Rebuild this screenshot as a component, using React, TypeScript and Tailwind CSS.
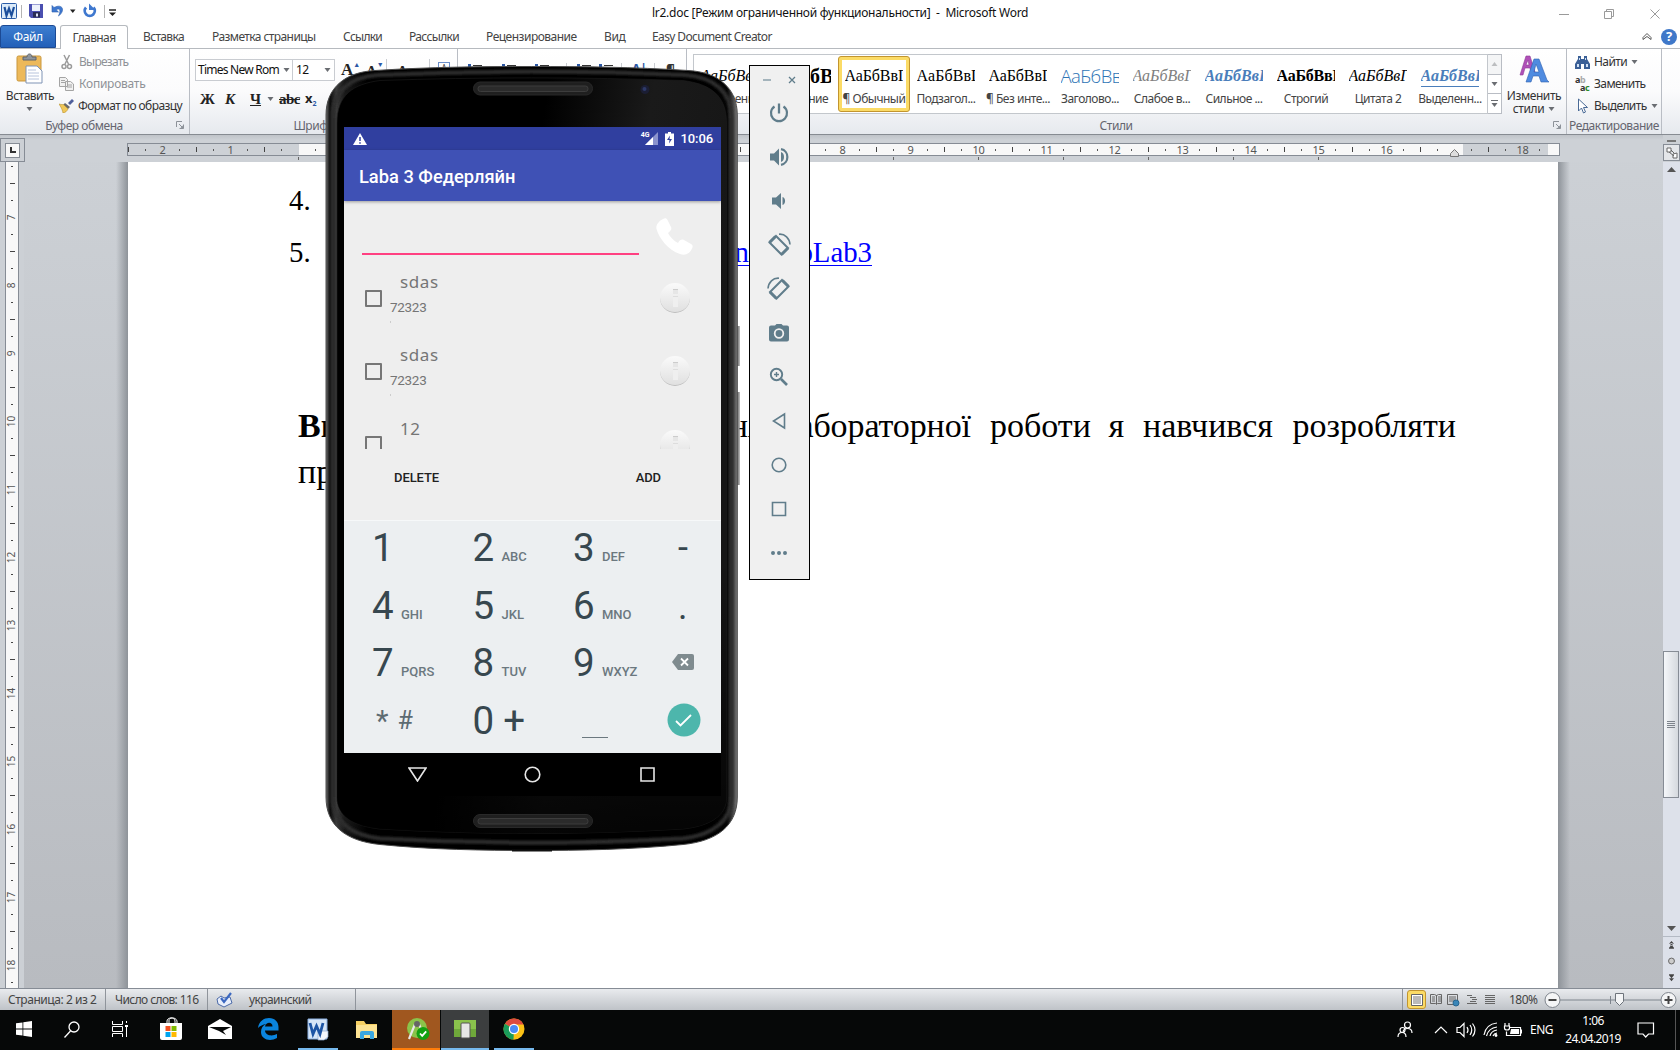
import React from 'react';

type Kids = { children?: React.ReactNode; className?: string };

const UI = "font-['Noto_Sans',sans-serif]";

/* ---------- small shared pieces ---------- */

function Caret({ className = '' }: { className?: string }) {
  return (
    <svg width="7" height="4" viewBox="0 0 7 4" className={'shrink-0 ' + className}>
      <path d="M0.500 0h6L3.500 4z" fill="#6a6d72" />
    </svg>
  );
}

function Launcher() {
  return (
    <svg width="8" height="8" viewBox="0 0 8 8" fill="none" stroke="#8d9299">
      <path d="M0.500 6V0.500H6M3 3l3.500 3.500M7.500 3.500v4h-4" />
      <path d="M4 7.500h3.500V4z" fill="#8d9299" stroke="none" />
    </svg>
  );
}

/* ---------- title bar ---------- */

function TitleBar() {
  return (
    <div className="flex h-[25px] items-center bg-white">
      <svg width="120" height="25" viewBox="0 0 120 25" className="shrink-0">
        <rect x="1.500" y="3.500" width="15" height="15" rx="1" fill="#dcebf9" stroke="#2b5da8" />
        <path d="M4.500 7l2 8.500 2.500-7 2.500 7L14 7" fill="none" stroke="#1c4f9c" strokeWidth="2.200" />
        <path d="M21.500 5v13M104.500 5v13" stroke="#b4b4b4" />
        <path d="M29 4h14v14H31l-2-2z" fill="#4a4fb0" />
        <rect x="32" y="4.500" width="8" height="6.500" fill="#eef2fb" />
        <rect x="33" y="12" width="7" height="5.500" fill="#2a2d55" />
        <rect x="36" y="13.500" width="2" height="3" fill="#dfe3f6" />
        <path d="M52 5.500v6.500h6.500l-2.300-2.200c3-2 5.300 0 2.300 6.200 7-5 4.500-13-4.500-8.500z" fill="#3f78cf" stroke="#2b5fae" strokeWidth=".6" />
        <path d="M70 9.500h5.500L72.800 13z" fill="#222" />
        <path d="M86 7.500a5 5 0 1 0 7.500 0" fill="none" stroke="#3f78cf" strokeWidth="2.800" />
        <path d="M89 3.500v6.500h6.500z" fill="#3f78cf" />
        <path d="M109 10h7" stroke="#222" strokeWidth="1.500" />
        <path d="M109 12.500h7L112.500 16z" fill="#222" />
      </svg>
      <div className="w-[532px]" />
      <div className="w-[390px] text-[12px] tracking-[-0.27px] whitespace-pre text-[#111]">lr2.doc [Режим ограниченной функциональности]  -  Microsoft Word</div>
      <div className="flex-1" />
      <svg width="130" height="25" viewBox="0 0 130 25" fill="none" stroke="#9a9a9a" className="shrink-0">
        <path d="M9 14.500h10M54.500 11.500h7v7h-7zM56.500 11v-1.500h7v7h-1.500M100.500 9.500l9 9m0-9l-9 9" />
      </svg>
    </div>
  );
}

/* ---------- ribbon tabs ---------- */

function TabRow() {
  const t = 'shrink-0 whitespace-nowrap text-[12px] text-[#444] pt-px';
  return (
    <div className="flex h-[24px] items-center border-b border-[#b6babf] bg-white">
      <div className="flex h-[23px] w-[56px] items-center justify-center rounded-t-[3px] border border-[#1c4a94] bg-linear-to-b from-[#3d7ed0] to-[#2360b8] pt-px text-[12px] tracking-[-0.4px] text-white">Файл</div>
      <div className="ml-[4px] flex h-[24px] w-[68px] items-center justify-center self-start rounded-t-[3px] border border-b-0 border-[#b6babf] bg-white pt-px text-[12px] tracking-[-0.6px] text-[#444]">
        Главная
      </div>
      <div className={t + ' ml-[15px] w-[69px] tracking-[-0.65px]'}>Вставка</div>
      <div className={t + ' w-[131px] tracking-[-0.58px]'}>Разметка страницы</div>
      <div className={t + ' w-[66px] tracking-[-0.75px]'}>Ссылки</div>
      <div className={t + ' w-[77px] tracking-[-0.65px]'}>Рассылки</div>
      <div className={t + ' w-[118px] tracking-[-0.5px]'}>Рецензирование</div>
      <div className={t + ' w-[48px] tracking-[-0.4px]'}>Вид</div>
      <div className={t + ' w-[130px] tracking-[-0.62px]'}>Easy Document Creator</div>
      <div className="flex-1" />
      <svg width="10" height="9" viewBox="0 0 10 9" fill="none" stroke="#555" className="mr-[9px]">
        <path d="M1 5.500L5 1.500l4 4M1 5.500v2l4-3 4 3v-2" />
      </svg>
      <div className="mr-[3px] flex size-[16px] items-center justify-center rounded-full bg-[#3f78c9] text-[13px] font-bold text-white">?</div>
    </div>
  );
}

/* ---------- ribbon ---------- */

function Group({ label, className = '', launcher = false, children }: Kids & { label: string; launcher?: boolean }) {
  return (
    <div className={'flex shrink-0 flex-col border-r border-[#b9bdc4] ' + className}>
      <div className="h-[67px] overflow-hidden">{children}</div>
      <div className="flex h-[19px] items-center">
        <div className="flex-1 pt-[2px] text-center text-[12px] tracking-[-0.45px] whitespace-nowrap text-[#65656f]">{label}</div>
        {launcher && (
          <div className="w-[21px] pl-[8px]">
            <Launcher />
          </div>
        )}
      </div>
    </div>
  );
}

function Clipboard() {
  const row = 'flex h-[22px] items-center gap-[5px] text-[12px] whitespace-nowrap';
  return (
    <Group label="Буфер обмена" launcher className="w-[190px]">
      <div className="flex">
        <div className="flex w-[59px] flex-col items-center pt-[4px]">
          <svg width="28" height="32" viewBox="0 0 28 32">
            <rect x="1" y="3" width="24" height="25" rx="1.500" fill="#edb95a" stroke="#c9973f" />
            <path d="M7 7V4h4c0-4 5-4 5 0h4v3z" fill="#8f959c" stroke="#5f656c" />
            <path d="M10 13h11l5 5v12H10z" fill="#fff" stroke="#7f93b5" />
            <path d="M12 17h8M12 20h11M12 23h11M12 26h11" stroke="#b8c4dc" />
          </svg>
          <div className="mt-[2px] pl-px text-[12px] leading-[17px] tracking-[-0.5px] text-[#333]">Вставить</div>
          <Caret className="mt-[3px]" />
        </div>
        <div className="pt-[2px]">
          <div className={row + ' text-[#8f9297]'}>
            <svg width="15" height="16" viewBox="0 0 15 16" fill="none" stroke="#9b9b9b" strokeWidth="1.500">
              <path d="M5 1l4.500 9M10.500 1L6 10" />
              <circle cx="5" cy="12.500" r="2" />
              <circle cx="10.500" cy="12.500" r="2" />
            </svg>
            <span className="tracking-[-0.75px]">Вырезать</span>
          </div>
          <div className={row + ' text-[#8f9297]'}>
            <svg width="15" height="14" viewBox="0 0 15 14" fill="#f1f1f1" stroke="#a4a4a4">
              <path d="M.500.500h6l2 2v7h-8zM6.500 4.500h5l3 2.500v6.500h-8z" />
              <path d="M2 3.500h4M2 5.500h4M8 8h5M8 10h5" />
            </svg>
            <span className="tracking-[-0.25px]">Копировать</span>
          </div>
          <div className={row + ' text-[#333]'}>
            <svg width="15" height="14" viewBox="0 0 15 14">
              <path d="M9 4l4-4 2 2-4 4z" fill="#4f5f9b" />
              <path d="M6 4l5 4-2 2-5-4z" fill="#6a6a6a" />
              <path d="M0 5c3 1 4 0 5 1l4 4c-1 2-3 4-5 4C3 9 1 7 0 5z" fill="#efc75a" stroke="#b8912c" strokeWidth=".6" />
            </svg>
            <span className="-ml-px tracking-[-0.57px]">Формат по образцу</span>
          </div>
        </div>
      </div>
    </Group>
  );
}

function FontGroup() {
  const b = "shrink-0 font-['Liberation_Serif',serif] text-[15px] font-bold text-[#222]";
  return (
    <Group label="Шрифт" launcher className="w-[268px]">
      <div className="flex h-[32px] items-end pl-[5px]">
        <div className="flex h-[22px] w-[98px] shrink-0 items-center border border-[#c9ccd1] bg-white pl-[2px] text-[12px] tracking-[-0.75px] whitespace-nowrap text-[#111]">
          <span className="w-[85px]">Times New Rom</span>
          <Caret />
        </div>
        <div className="-ml-px flex h-[22px] w-[43px] shrink-0 items-center justify-between border border-[#c9ccd1] bg-white pr-[3px] pl-[3px] text-[12px] tracking-[-0.5px] text-[#111]">
          12
          <Caret />
        </div>
        <div className={b + ' ml-[6px] flex h-[22px] w-[25px] items-center text-[17px]'}>
          A<span className="mb-[9px] text-[7px] text-[#2b57a5]">▲</span>
        </div>
        <div className={b + ' flex h-[22px] w-[20px] items-center pt-[3px] text-[13px]'}>
          A<span className="mb-[12px] text-[7px] text-[#2b57a5]">▼</span>
        </div>
        <div className="h-[22px] w-px bg-[#c9ccd1]" />
        <div className={b + ' ml-[10px] h-[20px] w-[32px] text-[14px] leading-[20px]'}>Aa</div>
        <div className="h-[22px] w-px bg-[#c9ccd1]" />
        <div className="ml-[8px] flex h-[19px] w-[12px] items-start justify-center border border-[#6c8ec8] text-[8px] leading-[10px] text-[#333]">A</div>
      </div>
      <div className="flex h-[36px] items-center pl-[10px]">
        <span className={b + ' w-[25px]'}>Ж</span>
        <span className={b + ' w-[25px] italic'}>К</span>
        <span className={b + ' w-[17px] underline'}>Ч</span>
        <Caret />
        <span className={b + ' ml-[5px] w-[26px] text-[11.500px] tracking-[-0.5px] line-through'}>abc</span>
        <span className="text-[13px] font-bold text-[#222]">x</span>
        <span className="mt-[10px] text-[7px] font-bold text-[#2b57a5]">2</span>
      </div>
    </Group>
  );
}

function ListIcon() {
  return (
    <svg width="14" height="16" viewBox="0 0 14 16">
      <path d="M5 2.500h9M5 7.500h9M5 12.500h9" stroke="#333" strokeWidth="1.200" />
      <path d="M0 1h3v3H0zM0 6h3v3H0zM0 11h3v3H0z" fill="#2b57a5" />
    </svg>
  );
}

function ParagraphGroup() {
  return (
    <Group label="Абзац" launcher className="w-[229px]">
      <div className="flex items-start pt-[14px] pl-[10px]">
        <div className="w-[34px]"><ListIcon /></div>
        <div className="w-[33px]"><ListIcon /></div>
        <div className="w-[31px]"><ListIcon /></div>
        <div className="mr-[10px] h-[22px] w-px bg-[#c9ccd1]" />
        <div className="w-[22px]"><ListIcon /></div>
        <div className="w-[22px]"><ListIcon /></div>
        <div className="mr-[10px] h-[22px] w-px bg-[#c9ccd1]" />
        <div className="w-[22px] text-[12px] leading-[12px] font-bold text-[#2b57a5]">A|</div>
        <div className="mr-[11px] h-[22px] w-px bg-[#c9ccd1]" />
        <div className="text-[14px] leading-[14px] font-bold text-[#333]">¶</div>
      </div>
    </Group>
  );
}

const serif = "font-['Liberation_Serif',serif]";
const STYLES = [
  { s: 'АаБбВвГ', n: 'Выделение', c: serif + ' italic text-black text-[16px]' },
  { s: 'АаБбВ', n: 'Название', c: serif + ' font-bold text-black text-[20px]' },
  { s: 'АаБбВвГ', n: '¶ Обычный', c: serif + ' text-black text-[16px] tracking-[-0.1px]' },
  { s: 'АаБбВвГ', n: 'Подзагол...', c: serif + ' text-black text-[16px] tracking-[0.1px]' },
  { s: 'АаБбВвГ', n: '¶ Без инте...', c: serif + ' text-black text-[16px] tracking-[-0.1px]' },
  { s: 'АаБбВв', n: 'Заголово...', c: "font-['Open_Sans',sans-serif] font-light text-[#2e74b5] text-[18.500px] tracking-[-0.6px]" },
  { s: 'АаБбВвГ', n: 'Слабое в...', c: serif + ' italic text-[#808080] text-[16px]' },
  { s: 'АаБбВвГ', n: 'Сильное ...', c: serif + ' italic font-bold text-[#4a7ebb] text-[16px]' },
  { s: 'АаБбВвГ', n: 'Строгий', c: serif + ' font-bold text-black text-[16px] tracking-[-0.2px]' },
  { s: 'АаБбВвГ', n: 'Цитата 2', c: serif + ' italic text-black text-[16px]' },
  { s: 'АаБбВвГ', n: 'Выделенн...', c: serif + ' italic font-bold text-[#4a7ebb] text-[16px] border-b border-[#4a7ebb]' },
];

function StylesGroup() {
  return (
    <Group label="Стили" launcher className="w-[880px]">
      <div className="flex">
        <div className="mt-[5px] ml-[6px] flex h-[60px] w-[795px] shrink-0 border border-[#c3c7cc] bg-white py-px">
          {STYLES.map((x, i) => (
            <div
              key={i}
              className={
                'flex h-[56px] w-[72px] shrink-0 flex-col items-center ' +
                (i === 2 ? 'rounded-[3px] border border-[#c2952f] bg-[#fbdb66] p-[3px]' : 'p-[4px]')
              }
            >
              <div className="flex h-full w-full flex-col items-center bg-white">
                <div className={'mt-[7px] mr-px h-[20px] w-[58px] overflow-hidden leading-[18px] whitespace-nowrap ' + x.c}>{x.s}</div>
                <div className="mt-[5px] text-[12px] leading-[14px] tracking-[-0.5px] whitespace-nowrap text-[#444]">{x.n}</div>
              </div>
            </div>
          ))}
        </div>
        <div className="mt-[5px] flex h-[60px] w-[14px] flex-col divide-y divide-[#b9bdc4] border border-l-0 border-[#b9bdc4]">
          <div className="flex flex-1 items-center justify-center bg-[#f4f5f6]"><Caret className="rotate-180 opacity-40" /></div>
          <div className="flex flex-1 items-center justify-center bg-white"><Caret /></div>
          <div className="flex flex-1 flex-col items-center justify-center gap-[2px] bg-white">
            <div className="h-px w-[7px] bg-[#6a6d72]" />
            <Caret />
          </div>
        </div>
        <div className="flex flex-1 flex-col items-center pt-[6px]">
          <svg width="30" height="29" viewBox="0 0 30 29">
            <path d="M1 20L7 1h4l5 16h-4l-1-4H6l-2 7zM7 10h3L9 5z" fill="#b050b8" stroke="#8d3a97" strokeWidth=".6" />
            <path d="M7 27L15 4h5l8 21 2 2h-8l-2-6h-6l-2 6zM15 17h5l-3-8z" fill="#4f8be0" stroke="#2f62b0" strokeWidth=".6" />
          </svg>
          <div className="mt-[5px] text-center text-[12px] leading-[13px] text-[#333]">
            <div className="tracking-[-0.4px]">Изменить</div>
            <div className="flex items-center justify-center gap-[4px] tracking-[-0.4px]">стили <Caret /></div>
          </div>
        </div>
      </div>
    </Group>
  );
}

function EditingGroup() {
  const row = 'flex h-[22px] items-center gap-[4px] text-[12px] tracking-[-0.6px] text-[#333]';
  return (
    <Group label="Редактирование" className="w-[95px]">
      <div className="pt-[2px] pl-[8px]">
        <div className={row}>
          <svg width="15" height="13" viewBox="0 0 15 13" fill="#3a5f96">
            <path d="M3 0h3v3h3V0h3v3l3 5v5H9V8H6v5H0V8l3-5z" />
            <path d="M2 8h2v3H2zM11 8h2v3h-2zM4 2h1v2H4zM10 2h1v2h-1z" fill="#cfe0f5" />
          </svg>
          Найти <Caret />
        </div>
        <div className={row}>
          <div className="w-[15px] text-[9px] leading-[8px] font-bold tracking-[-0.5px]">
            <span className="text-[#333]">a</span><span className="text-[#aaa]">b</span>
            <div className="pl-[5px] text-[#333]">a<span className="text-[#2a8a2a]">c</span></div>
          </div>
          Заменить
        </div>
        <div className={row}>
          <svg width="15" height="16" viewBox="0 0 15 16"><path d="M3.500 1v12l3-3 2 5 2-1-2-4.500h4z" fill="#fff" stroke="#4a6a96" /></svg>
          Выделить <Caret />
        </div>
      </div>
    </Group>
  );
}

function Ribbon() {
  return (
    <div className="flex h-[86px] border-b border-[#868b92] bg-linear-to-b from-white via-[#fbfbfc] to-[#e6e9ee]">
      <Clipboard />
      <FontGroup />
      <ParagraphGroup />
      <StylesGroup />
      <EditingGroup />
    </div>
  );
}

/* ---------- rulers ---------- */

function HRuler() {
  const cells = Array.from({ length: 84 }, (_, i) => i - 10);
  return (
    <div className="flex h-[27px] flex-1 flex-col pt-[8px]">
      <div className="flex h-[13px] w-[1433px] border border-[#868c95] bg-linear-to-r from-[#cdd1d6] from-[171px] to-[#f8f8f8] to-[171px]">
        <div className="-ml-[8px] flex h-[11px]">
          {cells.map((k) => (
            <div key={k} className={'flex w-[17px] shrink-0 items-center justify-center ' + (k > 68 ? 'bg-[#cdd1d6]' : '')}>
              {k % 4 === 0 && k !== 0 && k !== 68 ? (
                <span className="text-[11px] leading-[11px] tracking-[-0.3px] text-[#555]">{Math.abs(k / 4)}</span>
              ) : k === 0 ? null : k === 68 ? (
                <svg width="9" height="8" viewBox="0 0 9 8" className="mt-[6px]"><path d="M.500 7.500V4.500L4.500.500l4 4v3z" fill="#ddd" stroke="#777" /></svg>
              ) : k % 2 === 0 ? (
                <div className="h-[5px] w-px bg-[#444]" />
              ) : (
                <div className="h-[2px] w-px bg-[#555]" />
              )}
            </div>
          ))}
        </div>
      </div>
      <div className="ml-[171px] flex h-[4px] pt-px">
        {Array.from({ length: 13 }, (_, i) => (
          <div key={i} className="mr-[84px] h-[3px] w-px bg-[#666]" />
        ))}
      </div>
    </div>
  );
}

function VRuler() {
  const cells = Array.from({ length: 50 }, (_, i) => i - 3);
  return (
    <div className="h-[827px] w-[24px] shrink-0 overflow-hidden bg-[#ccd0d5] pl-[5px]">
      <div className="flex h-[827px] w-[14px] flex-col items-center overflow-hidden border-x border-[#868c95] bg-[#f8f8f8]">
        <div className="-mt-[4px] flex flex-col">
          {cells.map((k) => (
            <div key={k} className="flex h-[17px] w-[12px] shrink-0 items-center justify-center">
              {k % 4 === 0 ? (
                <span className="-rotate-90 text-[10px] leading-[11px] text-[#555]">{k / 4 + 7}</span>
              ) : k % 2 === 0 ? (
                <div className="h-px w-[5px] bg-[#444]" />
              ) : (
                <div className="h-px w-[2px] bg-[#444]" />
              )}
            </div>
          ))}
        </div>
      </div>
    </div>
  );
}

/* ---------- document ---------- */

function Page() {
  return (
    <div className={serif + ' flex h-[827px] w-[1430px] shrink-0 flex-col bg-white pt-[21px] text-black'}>
      <div className="h-[34px] pl-[161px] text-[28.800px] leading-[34px]">4.</div>
      <div className="mt-[18px] flex h-[34px] pl-[161px] text-[28.800px] leading-[34px]">
        <div className="w-[300px]">5.</div>
        <div className="w-[283px] text-right text-[#0000ff] underline decoration-1 underline-offset-[3px]">github.com/nAndoLab3</div>
      </div>
      <div className="mt-[134px] flex h-[46px] pr-[102px] pl-[170px] text-[34px] leading-[46px]">
        <div className="flex-1 font-bold">Ви</div>
        <div className="flex whitespace-nowrap">
          <span className="mr-[18px]">виконання</span>
          <span className="mr-[19px] tracking-[-0.1px]">лабораторної</span>
          <span className="mr-[17.500px]">роботи</span>
          <span className="mr-[19px]">я</span>
          <span className="mr-[19.500px]">навчився</span>
          <span>розробляти</span>
        </div>
      </div>
      <div className="h-[46px] pl-[170px] text-[34px] leading-[46px]">пр</div>
    </div>
  );
}

function Scroll() {
  return (
    <div className="flex h-[853px] w-[17px] shrink-0 flex-col items-center bg-[#dde1ea]">
      <div className="flex h-[27px] w-full flex-col items-center bg-[#ccd0d5] pt-[5px]">
        <div className="h-[2px] w-[9px] bg-[#777]" />
        <div className="mt-[2px] flex h-[17px] w-full items-center justify-center border border-[#868c95] bg-[#e4e6e9]">
          <svg width="12" height="12" viewBox="0 0 12 12" fill="#fff" stroke="#666"><path d="M1 1h4v4H1zM7 7l4-1v5H7zM3 5l5 4M5 3l3 3" /></svg>
        </div>
      </div>
      <svg width="9" height="5" viewBox="0 0 9 5" className="mt-[5px] shrink-0"><path d="M0 5h9L4.500 0z" fill="#555" /></svg>
      <div className="mt-[479px] mr-[1px] flex h-[147px] w-[16px] shrink-0 flex-col items-center justify-center gap-px border border-[#868c95] bg-linear-to-r from-[#f5f7fa] to-[#d5d9de]">
        {[0, 1, 2, 3].map((i) => (
          <div key={i} className="h-px w-[8px] bg-[#7d838b]" />
        ))}
      </div>
      <svg width="9" height="5" viewBox="0 0 9 5" className="mt-[128px] shrink-0"><path d="M0 0h9L4.500 5z" fill="#555" /></svg>
      <svg width="17" height="52" viewBox="0 0 17 52" className="mt-[5px] shrink-0 border-t border-[#b4bac4]" fill="#444">
        <path d="M6 7h5L8.500 4zM7.500 6h2v3h-2zM6 11h5L8.500 8zM6 11h5v1H6zM6 38h5v1H6zM6 39h5l-2.500 3zM6 42h5l-2.500 3z" />
        <circle cx="8.500" cy="24.500" r="3" fill="#ccc" stroke="#666" />
      </svg>
    </div>
  );
}

function Workspace() {
  return (
    <div className="flex h-[854px] border-b border-[#868c95]">
      <div className="flex w-[1663px] flex-col bg-linear-to-b from-[#cdd1d6] to-[#b8bbc0]">
        <div className="flex h-[27px] bg-linear-to-b from-[#bfc3c9] to-[#cdd1d6] to-[5px]">
          <div className="mt-[3px] flex h-[24px] w-[25px] shrink-0 items-center justify-center border border-[#868c95] bg-[#ccd0d5]">
            <div className="flex size-[15px] items-center justify-center border border-[#868c95] bg-[#f8f8f8]">
              <div className="size-[6px] border-b-2 border-l-2 border-[#333]" />
            </div>
          </div>
          <div className="w-[102px] shrink-0" />
          <HRuler />
        </div>
        <div className="flex h-[826px] overflow-hidden">
          <VRuler />
          <div className="w-[92px] shrink-0" />
          <div className="w-[12px] shrink-0 bg-linear-to-r from-[#8a8f9600] to-[#8e9399]" />
          <Page />
          <div className="w-[12px] shrink-0 bg-linear-to-r from-[#8e9399] to-[#8a8f9600]" />
        </div>
      </div>
      <Scroll />
    </div>
  );
}

/* ---------- status bar ---------- */

function StatusBar() {
  const cell = 'flex h-full shrink-0 items-center border-r border-[#8f949b] whitespace-nowrap';
  return (
    <div className="flex h-[21px] items-center bg-linear-to-b from-[#e9ebee] to-[#bfc3c8] text-[12px] leading-[16px] text-[#444]">
      <div className={cell + ' w-[106px] pl-[8px] tracking-[-0.45px]'}>Страница: 2 из 2</div>
      <div className={cell + ' w-[102px] pl-[9px] tracking-[-0.6px]'}>Число слов: 116</div>
      <div className={cell + ' w-[148px] gap-[16px] pl-[8px] tracking-[-0.6px]'}>
        <svg width="17" height="16" viewBox="0 0 17 16">
          <path d="M1 7l4-3 3 2 6-1 2 6-8 4-6-3z" fill="#e8eefb" stroke="#4b6aa8" />
          <path d="M5 6l3 4 7-9" fill="none" stroke="#3c68c0" strokeWidth="2.200" />
        </svg>
        украинский
      </div>
      <div className="w-[1046px] shrink-0" />
      <div className="h-full w-px shrink-0 bg-[#8f949b]" />
      <div className="ml-[4px] flex size-[19px] shrink-0 items-center justify-center rounded-[3px] border border-[#c2952f] bg-[#fbdb66]">
        <svg width="12" height="12" viewBox="0 0 12 12"><path d="M.500.500h11v11H.500z" fill="#fff" stroke="#666" /><path d="M2 3h8M2 5h8M2 7h8M2 9h8" stroke="#777" /></svg>
      </div>
      <svg width="76" height="20" viewBox="0 0 76 20" fill="none" stroke="#666" className="shrink-0">
        <path d="M4.500 4.500h4l2 1 2-1h3v9h-4l-1 1-1-1h-5zM10.500 5v9M6 7h3M6 9h3M6 11h3M12 7h3M12 9h3M12 11h3" />
        <path d="M21.500 4.500h10v10h-10zM23 7h7M23 9h7M23 11h5" />
        <circle cx="30" cy="13" r="3" fill="#3a86b8" stroke="#2a6690" />
        <path d="M41 5.500h5M44 7.500h6M46 9.500h5M44 11.500h6M41 13.500h10M59 5.500h10M59 7.500h10M59 9.500h10M59 11.500h10M59 13.500h10" />
      </svg>
      <div className="ml-[7px] w-[34px] shrink-0 tracking-[-0.5px]">180%</div>
      <svg width="134" height="20" viewBox="0 0 134 20" className="shrink-0">
        <path d="M17 10h101" stroke="#7f858d" />
        <path d="M67.500 6v8" stroke="#7f858d" />
        <circle cx="9.500" cy="10" r="7.500" fill="#f4f5f6" stroke="#7f858d" />
        <path d="M5.500 10h8" stroke="#444" strokeWidth="2" />
        <circle cx="125.500" cy="10" r="7.500" fill="#f4f5f6" stroke="#7f858d" />
        <path d="M121.500 10h8M125.500 6v8" stroke="#444" strokeWidth="2" />
        <path d="M72.500 3.500h8v8l-4 4-4-4z" fill="#f4f5f6" stroke="#6d737b" />
      </svg>
    </div>
  );
}

/* ---------- Windows taskbar ---------- */

function TaskCell({ className = '', children }: Kids) {
  return <div className={'flex h-[40px] shrink-0 items-center justify-center border-b-2 ' + className}>{children}</div>;
}

function Taskbar() {
  const none = ' border-transparent';
  const act = ' border-[#76b9ed]';
  return (
    <div className="flex h-[40px] items-center bg-[#060808] text-white">
      <TaskCell className={'w-[48px]' + none}>
        <svg width="16" height="16" viewBox="0 0 16 16" fill="#fff"><path d="M0 2.300L6.500 1.400v6.200H0zM7.300 1.200L16 0v7.600H7.300zM0 8.400h6.500v6.200L0 13.700zM7.300 8.400H16V16l-8.700-1.200z" /></svg>
      </TaskCell>
      <TaskCell className={'w-[48px]' + none}>
        <svg width="16" height="17" viewBox="0 0 16 17" fill="none" stroke="#fff" strokeWidth="1.300"><circle cx="10" cy="6" r="5" /><path d="M6.500 10L.500 16.500" /></svg>
      </TaskCell>
      <TaskCell className={'w-[48px]' + none}>
        <svg width="17" height="16" viewBox="0 0 17 16" fill="none" stroke="#fff"><path d="M.500 0v3.500h10V0M.500 5.500h10v5H.500zM.500 16v-3.500h10V16M14.500 0v2M14.500 5v11" /><path d="M13 4h3v2h-3z" fill="#fff" stroke="none" /></svg>
      </TaskCell>
      <TaskCell className={'ml-[2px] w-[49px]' + none}>
        <svg width="22" height="24" viewBox="0 0 22 24">
          <path d="M7 6V4c0-4 8-4 8 0v2M9 6V3c0-3 7-3 8 1v2" fill="none" stroke="#fff" />
          <path d="M0 6h22v15q0 2-2 2H2q-2 0-2-2z" fill="#fff" />
          <path d="M5.500 9h5v5h-5z" fill="#f25022" /><path d="M11.500 9h5v5h-5z" fill="#7fba00" /><path d="M5.500 15h5v5h-5z" fill="#00a4ef" /><path d="M11.500 15h5v5h-5z" fill="#ffb900" />
        </svg>
      </TaskCell>
      <TaskCell className={'w-[49px]' + none}>
        <svg width="24" height="20" viewBox="0 0 24 20"><path d="M0 7L12 0l12 7v13H0z" fill="#fff" /><path d="M1 8h22l-8 4 3 4L11 12z" fill="#060808" /></svg>
      </TaskCell>
      <TaskCell className={'w-[49px]' + none}>
        <svg width="21" height="22" viewBox="0 0 21 22" fill="#0a84de"><path d="M0 10C1 3 6 0 11 0c6 0 9.500 4 9.500 9v3.500H7c.500 5.500 7.500 6 12 3.500V20c-7 4-16 1.500-16-6 0-4 2-6.500 5-8-3 .500-6 2-8 4zm7-1.500h7.500C14.500 3.500 8 3.500 7 8.500z" /></svg>
      </TaskCell>
      <div className="flex w-[49px] shrink-0 justify-center">
        <div className="flex h-[40px] w-[40px] items-center justify-center border-b-2 border-[#76b9ed]">
          <svg width="22" height="23" viewBox="0 0 22 23">
            <path d="M1 1h19v20H1z" fill="#d6e6f8" stroke="#88aee0" /><path d="M11 13h10v6l-4 3h-6z" fill="#f5f8fd" stroke="#8fa9cf" strokeWidth=".7" />
            <path d="M3 5l3 11 3.500-8L13 16l3-11" fill="none" stroke="#1d55a5" strokeWidth="2.800" />
          </svg>
        </div>
      </div>
      <TaskCell className={'w-[49px]' + none}>
        <svg width="22" height="19" viewBox="0 0 22 19"><path d="M0 1h8l2 3h11v14H0z" fill="#f6d063" /><path d="M0 5h21v13H0z" fill="#fde393" /><path d="M4 19v-6q0-2 2-2h10q2 0 2 2v6h-4v-4H8v4z" fill="#3ba7e0" /></svg>
      </TaskCell>
      <TaskCell className="ml-px w-[48px] border-[#ff7d0a] bg-[#a0571f]">
        <svg width="24" height="24" viewBox="0 0 24 24" className="ml-[4px]">
          <circle cx="11" cy="11" r="10" fill="#8bc34a" /><path d="M3 22L9 7h4l4 10" fill="none" stroke="#e8e8e8" strokeWidth="2.200" /><circle cx="11" cy="7" r="3" fill="#666" />
          <circle cx="17" cy="16.500" r="6.500" fill="#12a012" /><path d="M14 16.500l2.200 2.300 4-4.500" fill="none" stroke="#fff" strokeWidth="1.800" />
        </svg>
      </TaskCell>
      <TaskCell className={'ml-px w-[48px] bg-[#3c3e3f]' + act}>
        <svg width="22" height="20" viewBox="0 0 22 20"><path d="M0 1h22v17H0z" fill="#6fa83a" /><path d="M0 1h22v9H0z" fill="#8ac24c" /><rect x="7" y="4" width="9" height="15" rx="1" fill="#e6e6e6" stroke="#555" /></svg>
      </TaskCell>
      <TaskCell className={'ml-[5px] w-[40px]' + act}>
        <svg width="22" height="22" viewBox="0 0 22 22">
          <circle cx="11" cy="11" r="10.500" fill="#fbc116" />
          <path d="M11 11L1.900 5.800A10.500 10.500 0 0 1 20.500 6.500H11z" fill="#dd4b3e" />
          <path d="M11 11L1.900 5.700A10.500 10.500 0 0 0 10.500 21.500L15 13.500z" fill="#1a9c5a" />
          <path d="M11 11h9.500a10.500 10.500 0 0 1-10 10.500z" fill="#fbc116" />
          <circle cx="11" cy="11" r="5.200" fill="#fff" /><circle cx="11" cy="11" r="4" fill="#4a8bf5" />
        </svg>
      </TaskCell>
      <div className="flex-1" />
      <svg width="130" height="40" viewBox="0 0 130 40" fill="none" stroke="#fff" strokeWidth="1.200" className="shrink-0">
        <circle cx="15.500" cy="15" r="3" /><path d="M11 23c0-6 9-6 9 0" /><circle cx="10.500" cy="20" r="2.500" /><path d="M6 27c0-6 8-6 8 0" />
        <path d="M43 23l6-6 6 6" />
        <path d="M65 17.500h3l4-4v13l-4-4h-3zM75 17q2 3 0 6M78 15q3.500 5 0 10M80.500 13.500q5 6.500 0 13" />
        <path d="M92 25q2-11 13-12M94.500 26q2-8 10.500-9M98 26q1-5 7-6M101 26q1-2.500 4-3" />
        <circle cx="104" cy="25.500" r="1.400" fill="#fff" stroke="none" />
        <path d="M117.500 17.500h11v8h-14v-4" /><path d="M119 19h8v5h-9z" fill="#fff" stroke="none" /><path d="M129.500 19.500v4M113 13v3M117 13v3M112.500 16h5v2q0 2-2.500 2t-2.500-2z" />
      </svg>
      <div className="ml-[8px] w-[31px] text-[12px] tracking-[-0.5px]">ENG</div>
      <div className="w-[64px] text-center text-[12px] leading-[18px] tracking-[-0.6px]">
        <div>1:06</div>
        <div>24.04.2019</div>
      </div>
      <svg width="18" height="18" viewBox="0 0 18 18" fill="none" stroke="#fff" strokeWidth="1.200" className="mr-[20px] ml-[12px]"><path d="M1 2h15.500v11h-5L8.700 16 6 13H1z" /></svg>
      <div className="mr-[4px] h-[40px] w-px bg-[#555]" />
    </div>
  );
}

/* ---------- phone emulator ---------- */

function Bezel() {
  return (
    <svg width="416" height="790" viewBox="324 64 416 790" className="absolute top-0 left-0">
      <defs>
        <linearGradient id="edge" x1="0" x2="1" y1="0" y2="0">
          <stop offset="0" stopColor="#6a6a6a" /><stop offset=".010" stopColor="#0b0b0b" /><stop offset=".025" stopColor="#3c3c3c" />
          <stop offset=".045" stopColor="#1a1a1a" /><stop offset=".1" stopColor="#000" /><stop offset=".94" stopColor="#000" />
          <stop offset=".975" stopColor="#060606" /><stop offset=".99" stopColor="#484848" /><stop offset="1" stopColor="#7a7a7a" />
        </linearGradient>
        <linearGradient id="glass" x1="0" x2="1" y1="0" y2="0.300">
          <stop offset="0" stopColor="#000" /><stop offset=".5" stopColor="#000" /><stop offset=".75" stopColor="#1a1a1a" /><stop offset="1" stopColor="#161616" />
        </linearGradient>
        <linearGradient id="bot" x1="0" x2="0" y1="0" y2="1">
          <stop offset="0" stopColor="#000" stopOpacity="0" /><stop offset="1" stopColor="#000" stopOpacity=".8" />
        </linearGradient>
        <filter id="soft" x="-5%" y="-5%" width="110%" height="110%"><feGaussianBlur stdDeviation="1.200" /></filter>
      </defs>
      <path d="M737 326h2.700v40H737zM737 392h2.700v93H737z" fill="#8d8d8d" />
      <path d="M326 797V115C326 88 345 72 375 70.500C430 67 480 66.500 531.500 66.500S633 67 688 70.500C718 72 737.300 88 737.300 115V797C737.300 825 718 841 683 844.500C633 849.500 580 850.500 531.500 850.500S430 849.500 380 844.500C345 841 326 825 326 797Z" fill="url(#edge)" stroke="#4c4c4c" strokeWidth="1" />
      <path d="M332.500 797V118C332.500 92 349 77 378 75C480 70.500 583 70.500 685 75C714 77 731.500 92 731.500 118V797C731.500 820 714 835 683 838.500C583 844 480 844 380 838.500C349 835 332.500 820 332.500 797Z" fill="none" stroke="#2e2e2e" strokeWidth="4" filter="url(#soft)" />
      <path d="M337 797V123C337 95 353 84 380 80.500C480 77 583 77 683 80.500C710 84 726.500 95 726.500 123V797C726.500 816 710 826 683 829C583 835 480 835 380 829C353 826 337 816 337 797Z" fill="url(#glass)" stroke="#1f1f1f" strokeWidth=".6" />
      <path d="M337 560H726.500V797C726.500 816 710 826 683 829C583 835 480 835 380 829C353 826 337 816 337 797Z" fill="url(#bot)" />
      <g fill="#1f1f1f" stroke="#292929">
        <rect x="473.500" y="82" width="119" height="13" rx="6.500" />
        <rect x="473.500" y="814.500" width="119" height="13" rx="6.500" />
      </g>
      <g fill="#2b2b2b" stroke="#3d3d3d">
        <rect x="478" y="86" width="110" height="5.500" rx="2.500" />
        <rect x="478" y="818.500" width="110" height="5.500" rx="2.500" />
      </g>
      <circle cx="645" cy="89.500" r="4.500" fill="#1b1e33" /><circle cx="644.500" cy="89" r="2" fill="#2d3968" />
      <path d="M512 850.500h40" stroke="#111" strokeWidth="2" />
    </svg>
  );
}

function Contact({ name, phone }: { name: string; phone: string }) {
  return (
    <div className="flex h-[73.400px] shrink-0 items-start pl-[20.500px]">
      <div className="mt-[17.500px] size-[17px] shrink-0 rounded-[1px] border-2 border-[#767676]" />
      <div className="ml-[8.500px] flex-1 text-[#757575]">
        <div className="pl-[10px] font-['Noto_Sans',sans-serif] text-[17px] leading-[19px] tracking-[0.6px]">{name}</div>
        <div className="mt-[7px] text-[13.500px] leading-[18px] tracking-[-0.3px]">{phone}</div>
        <div className="mt-[5px] h-[2px] w-px bg-[#ccc]" />
      </div>
      <div className="mt-[11px] mr-[31px] flex size-[30px] flex-col items-center gap-[2px] rounded-full border-b border-[#bdbdbd] bg-linear-to-b from-[#fafafa] to-[#e0e0e0] pt-[6px]">
        <div className="h-[5px] w-[5px] border-t border-[#ccc] bg-[#e6e6e6]" />
        <div className="h-[11px] w-[5px] border-t border-[#ddd] bg-[#efefef]" />
      </div>
    </div>
  );
}

function Key({ d, l = '' }: { d: string; l?: string }) {
  return (
    <div className="flex items-baseline text-[#37474f]">
      <span className="w-[29px] text-[38.500px] leading-[53px]">{d}</span>
      <span className="text-[13px] font-medium text-[#6b787f]">{l}</span>
    </div>
  );
}

function Keyboard() {
  return (
    <div className="grid h-[233px] grid-cols-[100.500px_100.500px_100px_1fr] grid-rows-[57.500px_57.500px_57.500px_57.500px] border-t border-[#f6f8f9] bg-[#eceff1] pl-[28px]">
      <Key d="1" /><Key d="2" l="ABC" /><Key d="3" l="DEF" />
      <div className="pl-[5px] text-[36px] leading-[54px] text-[#37474f]">-</div>
      <Key d="4" l="GHI" /><Key d="5" l="JKL" /><Key d="6" l="MNO" />
      <div className="pl-[5px] text-[36px] leading-[57px] text-[#37474f]">.</div>
      <Key d="7" l="PQRS" /><Key d="8" l="TUV" /><Key d="9" l="WXYZ" />
      <svg width="22" height="16" viewBox="0 0 22 16" className="mt-[18px] -ml-px"><path d="M6 0h14q2 0 2 2v12q0 2-2 2H6L0 8z" fill="#7f8b8f" /><path d="M9 4.500l7 7m0-7l-7 7" stroke="#fff" strokeWidth="1.800" /></svg>
      <div className="flex gap-[9px] pl-[4px] text-[25px] leading-[54px] text-[#5d6b72]">
        <span className="text-[29px] leading-[55px]">*</span>
        <span>#</span>
      </div>
      <div className="flex items-baseline gap-[9px] text-[38.500px] leading-[53px] text-[#37474f]">0 <span>+</span></div>
      <div className="pt-[43px] pl-[9px]"><div className="h-[1.500px] w-[26px] bg-[#6b787f]" /></div>
      <svg width="34" height="34" viewBox="0 0 34 34" className="mt-[9px] -ml-[6.500px]"><circle cx="17" cy="17" r="16.500" fill="#4db6ac" /><path d="M9 18l4.500 4.500L24 12" fill="none" stroke="#fff" strokeWidth="1.800" /></svg>
    </div>
  );
}

function Phone() {
  return (
    <div className="absolute top-[64px] left-[324px] h-[790px] w-[416px] font-['Roboto',sans-serif]">
      <Bezel />
      <div className="relative mt-[63px] ml-[20px] flex w-[377px] flex-col overflow-hidden">
        <div className="flex h-[23px] items-center bg-[#303f9f] pr-[8px] pl-[9px] text-white">
          <svg width="14" height="12" viewBox="0 0 14 12"><path d="M7 0l7 12H0z" fill="#fff" /><path d="M7 4v4M7 9.300v1.500" stroke="#303f9f" strokeWidth="1.500" /></svg>
          <div className="flex-1" />
          <div className="-mt-[7px] text-[7px] font-bold">4G</div>
          <svg width="13" height="13" viewBox="0 0 13 13" className="-ml-[5px]"><path d="M13 0v13H0z" fill="#8a93cd" /><path d="M8 5v8H0z" fill="#fff" /></svg>
          <svg width="9" height="14" viewBox="0 0 9 14" className="ml-[7px]"><path d="M0 1.500h3V0h3v1.500h3V14H0z" fill="#fff" /><path d="M5 3.500L2 8h2.500L4 11.500 7 7H4.500z" fill="#303f9f" /></svg>
          <div className="ml-[7px] text-[13px] font-medium tracking-[-0.1px]">10:06</div>
        </div>
        <div className="z-10 flex h-[51px] items-center bg-[#3f51b5] pt-[3px] pl-[15px] text-[18.300px] font-medium text-white shadow-[0_1px_3px_rgba(0,0,0,0.35)]">Laba 3 Федерляйн</div>
        <div className="flex h-[319px] flex-col bg-[#eeeeee]">
          <div className="flex h-[67px] shrink-0 items-start">
            <div className="mt-[52px] ml-[18px] h-[1.500px] w-[277px] bg-[#ff4081]" />
            <svg width="37" height="37" viewBox="0 0 37 37" className="mt-[17px] ml-[17px]"><path d="M7 1C9 0 10.500 0 11.500 2L15 9C16 11 15 12.500 12 15C14 19 18 23 22 25C24 21.500 26 21 28 22L35 26C37 27 37 29 36 30.500C34 35 30 38 24 36C12 32 3 20 .500 11C-.500 7 3 3 7 1Z" fill="#fff" /></svg>
          </div>
          <div className="flex h-[181px] shrink-0 flex-col overflow-hidden pt-[4px]">
            <Contact name="sdas" phone="72323" />
            <Contact name="sdas" phone="72323" />
            <Contact name="12" phone="123" />
          </div>
          <div className="mt-[18px] flex justify-between pr-[60px] pl-[50px] text-[13px] leading-[22px] font-medium tracking-[-0.1px] text-[#212121]">
            <span>DELETE</span>
            <span>ADD</span>
          </div>
        </div>
        <Keyboard />
        <div className="flex h-[43px] items-center bg-black pl-[63.500px]">
          <svg width="19" height="15" viewBox="0 0 19 15" fill="none" stroke="#e6e6e6" strokeWidth="1.600"><path d="M1 1h17L9.500 14z" /></svg>
          <svg width="17" height="17" viewBox="0 0 17 17" fill="none" stroke="#e6e6e6" strokeWidth="1.600" className="ml-[97px]"><circle cx="8.500" cy="8.500" r="7.300" /></svg>
          <svg width="15" height="15" viewBox="0 0 15 15" fill="none" stroke="#e6e6e6" strokeWidth="1.600" className="ml-[99px]"><path d="M1 1h13v13H1z" /></svg>
        </div>
      </div>
    </div>
  );
}

function Tool({ children }: Kids) {
  return (
    <div className="flex h-[44px] w-full items-center justify-center pr-[2px]">
      <svg width="24" height="24" viewBox="0 0 24 24" fill="none" stroke="#607d8b" strokeWidth="1.600">{children}</svg>
    </div>
  );
}

function EmulatorTools() {
  const f = { fill: '#607d8b', stroke: 'none' };
  return (
    <div className="absolute top-[65px] left-[749px] flex h-[515px] w-[61px] flex-col items-center border border-black bg-[#f0f0f0]">
      <div className="flex h-[25px] w-full items-center pt-[3px] pl-[13px]">
        <div className="h-[2px] w-[8px] bg-[#a4b4bc]" />
        <svg width="8" height="8" viewBox="0 0 8 8" stroke="#607d8b" strokeWidth="1.300" className="ml-[17px]"><path d="M1 1l6 6m0-6L1 7" /></svg>
      </div>
      <Tool><path d="M12 2.500v10" strokeWidth="2.300" /><path d="M7.500 5.500a8 8 0 1 0 9 0" strokeWidth="2.200" /></Tool>
      <Tool><path d="M3 8.500v7h4l5 5V3.500L7 8.500zM14 7c4 1 4 9 0 10z" {...f} /><path d="M14 4.200c8.500 1.500 8.500 14 0 15.600" strokeWidth="2.200" /></Tool>
      <Tool><path d="M5 8.500v7h4l5 4.500V4L9 8.500zM15.500 8c3.500 1 3.500 7 0 8z" {...f} /></Tool>
      <Tool><path d="M9 3l12 12-6.500 6.500-12-12z" strokeWidth="2" /><path d="M8.500 3.500L2.500 9.500M21 15l-6.500 6.500" strokeWidth="3" /><path d="M12 1.200c6-.5 10.500 4 11 10.300" /></Tool>
      <Tool><path d="M15 3L3 15l6.500 6.500 12-12z" strokeWidth="2" /><path d="M15.500 3.500l6 6M3 15l6.500 6.500" strokeWidth="3" /><path d="M12 1.200C6 .7 1.500 5.200 1 11.500" /></Tool>
      <Tool><path d="M4 4.500h4L9.500 3h5L16 4.500h4q2 0 2 2v12q0 2-2 2H4q-2 0-2-2v-12q0-2 2-2z" {...f} /><circle cx="12" cy="12.500" r="4.300" stroke="#f0f0f0" strokeWidth="1.800" /></Tool>
      <Tool><circle cx="9.500" cy="9.500" r="5.700" strokeWidth="1.900" /><path d="M9.500 7v5M7 9.500h5" strokeWidth="1.400" /><path d="M14 14l6 6" strokeWidth="2.600" /></Tool>
      <Tool><path d="M17.500 5v14L6.500 12z" /></Tool>
      <Tool><circle cx="12" cy="12" r="6.800" /></Tool>
      <Tool><path d="M5.500 5.500h13v13h-13z" /></Tool>
      <Tool><path d="M4 12a2 2 0 1 0 4 0a2 2 0 1 0-4 0M10 12a2 2 0 1 0 4 0a2 2 0 1 0-4 0M16 12a2 2 0 1 0 4 0a2 2 0 1 0-4 0" {...f} /></Tool>
    </div>
  );
}

export default function App() {
  return (
    <div className={UI + ' relative h-[1050px] w-[1680px] overflow-hidden bg-white'}>
      <TitleBar />
      <TabRow />
      <Ribbon />
      <Workspace />
      <StatusBar />
      <Taskbar />
      <Phone />
      <EmulatorTools />
    </div>
  );
}
